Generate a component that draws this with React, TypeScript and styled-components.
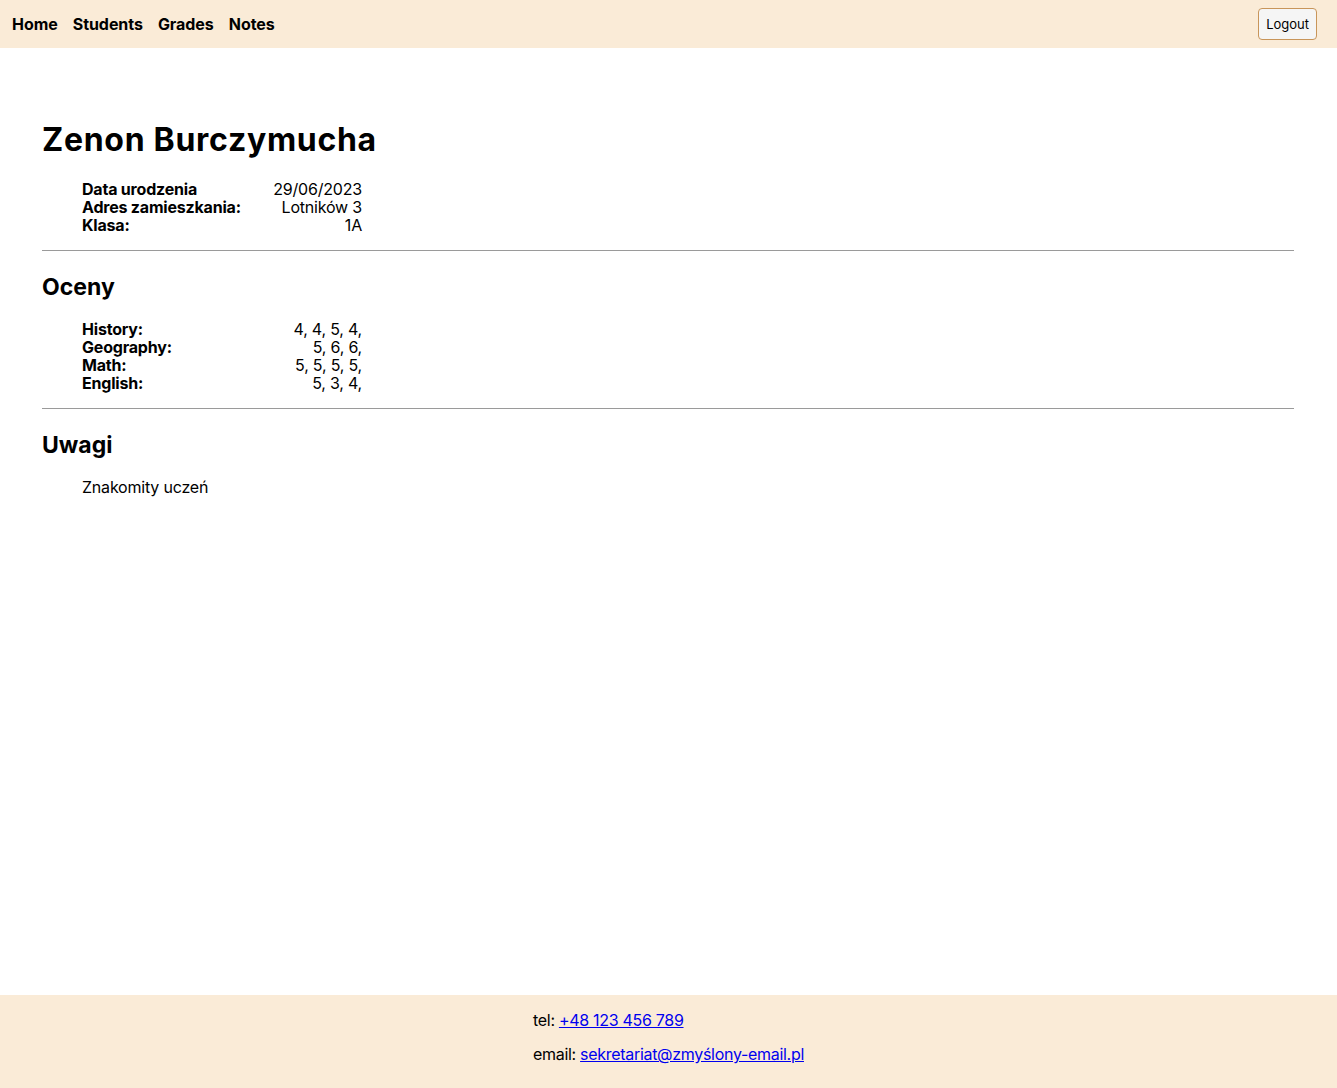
import React from "react";
import styled, { createGlobalStyle } from "styled-components";

type RowType = {
  label: string;
  value: string;
};

const info: RowType[] = [
  { label: "Data urodzenia", value: "29/06/2023" },
  { label: "Adres zamieszkania:", value: "Lotników 3" },
  { label: "Klasa:", value: "1A" },
];

const grades: RowType[] = [
  { label: "History:", value: "4, 4, 5, 4," },
  { label: "Geography:", value: "5, 6, 6," },
  { label: "Math:", value: "5, 5, 5, 5," },
  { label: "English:", value: "5, 3, 4," },
];

const GlobalStyle = createGlobalStyle`
  html, body {
    margin: 0;
    padding: 0;
  }
  body {
    font-family: Inter, "Noto Sans", "Liberation Sans", sans-serif;
    font-size: 16px;
    letter-spacing: -0.2px;
    color: #000;
    background: #fff;
  }
`;

const Page = styled.div`
  display: flex;
  flex-direction: column;
  min-height: 100vh;
`;

const Header = styled.header`
  display: flex;
  align-items: center;
  justify-content: space-between;
  height: 48px;
  padding: 0 20px 0 12px;
  background-color: antiquewhite;
`;

const Nav = styled.nav`
  display: flex;
  gap: 15px;
`;

const NavLink = styled.a`
  font-weight: 700;
  font-size: 16px;
  letter-spacing: -0.05px;
  color: #000;
  text-decoration: none;
  cursor: pointer;
`;

const LogoutButton = styled.button`
  height: 32px;
  padding: 0 7px;
  font-family: Inter, "Liberation Sans", sans-serif;
  font-size: 13px;
  color: #000;
  background: #f5f5f5;
  border: 1px solid #c8955a;
  border-radius: 4px;
`;

const Main = styled.main`
  flex: 1;
  padding: 51px 43px 40px 42px;
`;

const Title = styled.h1`
  margin: 22px 0 21px;
  font-size: 32px;
  line-height: 38px;
  font-weight: 700;
  letter-spacing: 0.7px;
`;

const Subtitle = styled.h2`
  margin: 21px 0 18px;
  font-size: 23px;
  line-height: 30px;
  font-weight: 700;
  letter-spacing: 0;
`;

const Table = styled.div`
  display: grid;
  grid-template-columns: auto auto;
  width: 280px;
  margin-left: 40px;
  line-height: 18px;
`;

const Label = styled.span`
  font-weight: 700;
`;

const Value = styled.span`
  text-align: right;
`;

const Divider = styled.hr`
  margin: 16px 0;
  border: none;
  border-top: 1px solid #9a9a9a;
`;

const Note = styled.p`
  margin: 0 0 0 40px;
  line-height: 18px;
`;

const Footer = styled.footer`
  display: flex;
  justify-content: center;
  padding: 0 0 9px;
  background-color: antiquewhite;
`;

const Contact = styled.div`
  letter-spacing: -0.3px;
  p {
    margin: 16px 0;
    line-height: 18px;
  }
  a {
    color: #0000ee;
  }
`;

const DataTable = ({ rows }: { rows: RowType[] }) => (
  <Table>
    {rows.map((r) => (
      <React.Fragment key={r.label}>
        <Label>{r.label}</Label>
        <Value>{r.value}</Value>
      </React.Fragment>
    ))}
  </Table>
);

export default function App() {
  return (
    <Page>
      <GlobalStyle />
      <Header>
        <Nav>
          <NavLink>Home</NavLink>
          <NavLink>Students</NavLink>
          <NavLink>Grades</NavLink>
          <NavLink>Notes</NavLink>
        </Nav>
        <LogoutButton>Logout</LogoutButton>
      </Header>
      <Main>
        <Title>Zenon Burczymucha</Title>
        <DataTable rows={info} />
        <Divider />
        <Subtitle>Oceny</Subtitle>
        <DataTable rows={grades} />
        <Divider />
        <Subtitle>Uwagi</Subtitle>
        <Note>Znakomity uczeń</Note>
      </Main>
      <Footer>
        <Contact>
          <p>
            tel: <a href="#">+48 123 456 789</a>
          </p>
          <p>
            email: <a href="#">sekretariat@zmyślony-email.pl</a>
          </p>
        </Contact>
      </Footer>
    </Page>
  );
}
